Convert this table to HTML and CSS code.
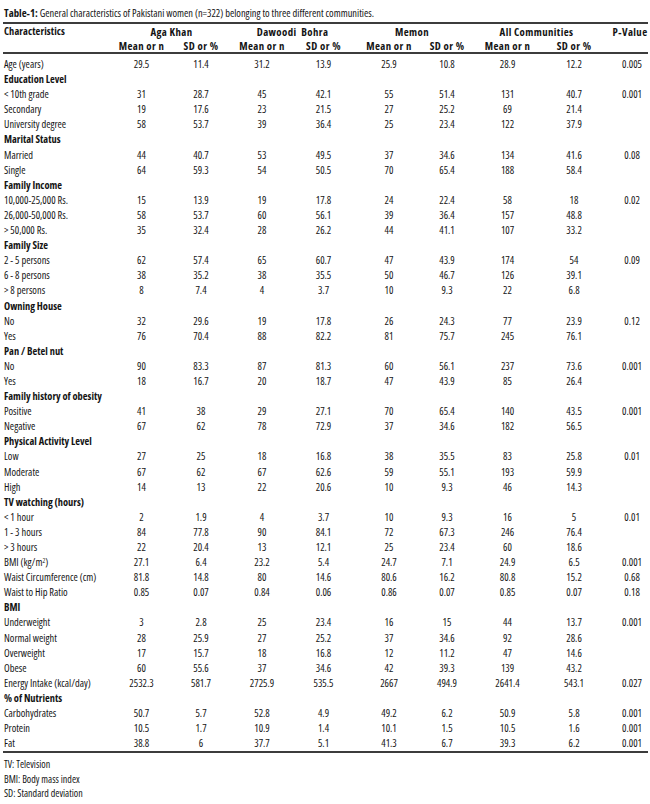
FILE: index.html
```html
<!DOCTYPE html>
<html lang="en">
<head>
<meta charset="utf-8">
<title>Table-1</title>
<link rel="stylesheet" href="styles.css">
</head>
<body>
<div class="caption"><b>Table-1:</b> General characteristics of Pakistani women (n=322) belonging to three different communities.</div>
<table class="data">
<colgroup>
<col class="c-char"><col class="c2"><col class="c3"><col class="c4"><col class="c5"><col class="c6"><col class="c7"><col class="c8"><col class="c9"><col class="c10">
</colgroup>
<thead>
<tr class="h1">
<th class="lab" rowspan="2">Characteristics</th>
<th colspan="2">Aga Khan</th>
<th colspan="2" class="spaced">Dawoodi&nbsp; Bohra</th>
<th colspan="2">Memon</th>
<th colspan="2">All Communities</th>
<th class="pv" rowspan="2">P-Value</th>
</tr>
<tr class="h2">
<th>Mean or n</th><th>SD or %</th>
<th>Mean or n</th><th>SD or %</th>
<th>Mean or n</th><th>SD or %</th>
<th>Mean or n</th><th>SD or %</th>
</tr>
</thead>
<tbody>
<tr class="first"><td class="lab">Age (years)</td><td>29.5</td><td>11.4</td><td>31.2</td><td>13.9</td><td>25.9</td><td>10.8</td><td>28.9</td><td>12.2</td><td class="pv">0.005</td></tr>
<tr class="grp"><td class="lab" colspan="10">Education Level</td></tr>
<tr><td class="lab">&lt; 10th grade</td><td>31</td><td>28.7</td><td>45</td><td>42.1</td><td>55</td><td>51.4</td><td>131</td><td>40.7</td><td class="pv">0.001</td></tr>
<tr><td class="lab">Secondary</td><td>19</td><td>17.6</td><td>23</td><td>21.5</td><td>27</td><td>25.2</td><td>69</td><td>21.4</td><td class="pv"></td></tr>
<tr><td class="lab">University degree</td><td>58</td><td>53.7</td><td>39</td><td>36.4</td><td>25</td><td>23.4</td><td>122</td><td>37.9</td><td class="pv"></td></tr>
<tr class="grp"><td class="lab" colspan="10">Marital Status</td></tr>
<tr><td class="lab">Married</td><td>44</td><td>40.7</td><td>53</td><td>49.5</td><td>37</td><td>34.6</td><td>134</td><td>41.6</td><td class="pv">0.08</td></tr>
<tr><td class="lab">Single</td><td>64</td><td>59.3</td><td>54</td><td>50.5</td><td>70</td><td>65.4</td><td>188</td><td>58.4</td><td class="pv"></td></tr>
<tr class="grp"><td class="lab" colspan="10">Family Income</td></tr>
<tr><td class="lab">10,000-25,000 Rs.</td><td>15</td><td>13.9</td><td>19</td><td>17.8</td><td>24</td><td>22.4</td><td>58</td><td>18</td><td class="pv">0.02</td></tr>
<tr><td class="lab">26,000-50,000 Rs.</td><td>58</td><td>53.7</td><td>60</td><td>56.1</td><td>39</td><td>36.4</td><td>157</td><td>48.8</td><td class="pv"></td></tr>
<tr><td class="lab">&gt; 50,000 Rs.</td><td>35</td><td>32.4</td><td>28</td><td>26.2</td><td>44</td><td>41.1</td><td>107</td><td>33.2</td><td class="pv"></td></tr>
<tr class="grp"><td class="lab" colspan="10">Family Size</td></tr>
<tr><td class="lab">2 - 5 persons</td><td>62</td><td>57.4</td><td>65</td><td>60.7</td><td>47</td><td>43.9</td><td>174</td><td>54</td><td class="pv">0.09</td></tr>
<tr><td class="lab">6 - 8 persons</td><td>38</td><td>35.2</td><td>38</td><td>35.5</td><td>50</td><td>46.7</td><td>126</td><td>39.1</td><td class="pv"></td></tr>
<tr><td class="lab">&gt; 8 persons</td><td>8</td><td>7.4</td><td>4</td><td>3.7</td><td>10</td><td>9.3</td><td>22</td><td>6.8</td><td class="pv"></td></tr>
<tr class="grp"><td class="lab" colspan="10">Owning House</td></tr>
<tr><td class="lab">No</td><td>32</td><td>29.6</td><td>19</td><td>17.8</td><td>26</td><td>24.3</td><td>77</td><td>23.9</td><td class="pv">0.12</td></tr>
<tr><td class="lab">Yes</td><td>76</td><td>70.4</td><td>88</td><td>82.2</td><td>81</td><td>75.7</td><td>245</td><td>76.1</td><td class="pv"></td></tr>
<tr class="grp"><td class="lab" colspan="10">Pan / Betel nut</td></tr>
<tr><td class="lab">No</td><td>90</td><td>83.3</td><td>87</td><td>81.3</td><td>60</td><td>56.1</td><td>237</td><td>73.6</td><td class="pv">0.001</td></tr>
<tr><td class="lab">Yes</td><td>18</td><td>16.7</td><td>20</td><td>18.7</td><td>47</td><td>43.9</td><td>85</td><td>26.4</td><td class="pv"></td></tr>
<tr class="grp"><td class="lab" colspan="10">Family history of obesity</td></tr>
<tr><td class="lab">Positive</td><td>41</td><td>38</td><td>29</td><td>27.1</td><td>70</td><td>65.4</td><td>140</td><td>43.5</td><td class="pv">0.001</td></tr>
<tr><td class="lab">Negative</td><td>67</td><td>62</td><td>78</td><td>72.9</td><td>37</td><td>34.6</td><td>182</td><td>56.5</td><td class="pv"></td></tr>
<tr class="grp"><td class="lab" colspan="10">Physical Activity Level</td></tr>
<tr><td class="lab">Low</td><td>27</td><td>25</td><td>18</td><td>16.8</td><td>38</td><td>35.5</td><td>83</td><td>25.8</td><td class="pv">0.01</td></tr>
<tr><td class="lab">Moderate</td><td>67</td><td>62</td><td>67</td><td>62.6</td><td>59</td><td>55.1</td><td>193</td><td>59.9</td><td class="pv"></td></tr>
<tr><td class="lab">High</td><td>14</td><td>13</td><td>22</td><td>20.6</td><td>10</td><td>9.3</td><td>46</td><td>14.3</td><td class="pv"></td></tr>
<tr class="grp"><td class="lab" colspan="10">TV watching (hours)</td></tr>
<tr><td class="lab">&lt; 1 hour</td><td>2</td><td>1.9</td><td>4</td><td>3.7</td><td>10</td><td>9.3</td><td>16</td><td>5</td><td class="pv">0.01</td></tr>
<tr><td class="lab">1 - 3 hours</td><td>84</td><td>77.8</td><td>90</td><td>84.1</td><td>72</td><td>67.3</td><td>246</td><td>76.4</td><td class="pv"></td></tr>
<tr><td class="lab">&gt; 3 hours</td><td>22</td><td>20.4</td><td>13</td><td>12.1</td><td>25</td><td>23.4</td><td>60</td><td>18.6</td><td class="pv"></td></tr>
<tr><td class="lab">BMI (kg/m<sup>2</sup>)</td><td>27.1</td><td>6.4</td><td>23.2</td><td>5.4</td><td>24.7</td><td>7.1</td><td>24.9</td><td>6.5</td><td class="pv">0.001</td></tr>
<tr><td class="lab">Waist Circumference (cm)</td><td>81.8</td><td>14.8</td><td>80</td><td>14.6</td><td>80.6</td><td>16.2</td><td>80.8</td><td>15.2</td><td class="pv">0.68</td></tr>
<tr><td class="lab">Waist to Hip Ratio</td><td>0.85</td><td>0.07</td><td>0.84</td><td>0.06</td><td>0.86</td><td>0.07</td><td>0.85</td><td>0.07</td><td class="pv">0.18</td></tr>
<tr class="grp"><td class="lab" colspan="10">BMI</td></tr>
<tr><td class="lab">Underweight</td><td>3</td><td>2.8</td><td>25</td><td>23.4</td><td>16</td><td>15</td><td>44</td><td>13.7</td><td class="pv">0.001</td></tr>
<tr><td class="lab">Normal weight</td><td>28</td><td>25.9</td><td>27</td><td>25.2</td><td>37</td><td>34.6</td><td>92</td><td>28.6</td><td class="pv"></td></tr>
<tr><td class="lab">Overweight</td><td>17</td><td>15.7</td><td>18</td><td>16.8</td><td>12</td><td>11.2</td><td>47</td><td>14.6</td><td class="pv"></td></tr>
<tr><td class="lab">Obese</td><td>60</td><td>55.6</td><td>37</td><td>34.6</td><td>42</td><td>39.3</td><td>139</td><td>43.2</td><td class="pv"></td></tr>
<tr><td class="lab">Energy Intake (kcal/day)</td><td>2532.3</td><td>581.7</td><td>2725.9</td><td>535.5</td><td>2667</td><td>494.9</td><td>2641.4</td><td>543.1</td><td class="pv">0.027</td></tr>
<tr class="grp"><td class="lab" colspan="10">% of Nutrients</td></tr>
<tr><td class="lab">Carbohydrates</td><td>50.7</td><td>5.7</td><td>52.8</td><td>4.9</td><td>49.2</td><td>6.2</td><td>50.9</td><td>5.8</td><td class="pv">0.001</td></tr>
<tr><td class="lab">Protein</td><td>10.5</td><td>1.7</td><td>10.9</td><td>1.4</td><td>10.1</td><td>1.5</td><td>10.5</td><td>1.6</td><td class="pv">0.001</td></tr>
<tr class="last"><td class="lab">Fat</td><td>38.8</td><td>6</td><td>37.7</td><td>5.1</td><td>41.3</td><td>6.7</td><td>39.3</td><td>6.2</td><td class="pv">0.001</td></tr>
</tbody>
</table>
<div class="notes">
<div class="note">TV: Television</div>
<div class="note">BMI: Body mass index</div>
<div class="note">SD: Standard deviation</div>
</div>
</body>
</html>
```
FILE: styles.css
```css
html, body {
  margin: 0;
  padding: 0;
  background: #ffffff;
  overflow: hidden;
}
body {
  font-family: "Open Sans", "DejaVu Sans Condensed", sans-serif;
  font-stretch: 75%;
  font-size: 10.4px;
  font-weight: 430;
  color: #141414;
  width: 650px;
}
.caption {
  padding: 6px 0 0 4px;
  line-height: 14px;
  font-size: 10.4px;
  white-space: nowrap;
}
.caption b {
  font-weight: 700;
  font-size: 10.8px;
}
.data {
  margin: 2px 0 0 3px;
  width: 645px;
  table-layout: fixed;
  border-collapse: separate;
  border-spacing: 0;
}
.c-char { width: 109px; }
.c2 { width: 59px; }
.c3 { width: 60px; }
.c4 { width: 62px; }
.c5 { width: 61px; }
.c6 { width: 70px; }
.c7 { width: 46px; }
.c8 { width: 75px; }
.c9 { width: 58px; }
.c10 { width: 45px; }
.data th, .data td {
  padding: 0;
  text-align: center;
  white-space: nowrap;
  overflow: visible;
}
.data th {
  font-weight: 700;
  font-size: 10.8px;
  letter-spacing: 0.4px;
}
.data th.lab {
  font-size: 10.4px;
  letter-spacing: 0.1px;
}
.data .h1 th {
  border-top: 2px solid #3c3c3c;
  line-height: 15px;
  vertical-align: top;
}
.data .h2 th {
  line-height: 13px;
  border-bottom: 2px solid #3c3c3c;
}
.data th.lab, .data th.pv {
  border-bottom: 2px solid #3c3c3c;
}
.spaced {
  letter-spacing: 0.5px;
}
.data td {
  line-height: 15.1px;
  vertical-align: middle;
}
.data .lab {
  text-align: left;
  padding-left: 1px;
}
.data .pv {
  padding-left: 13px;
}
.data th.pv {
  padding-left: 9px;
}
.data .grp td {
  font-weight: 700;
}
.data .first td {
  padding-top: 3px;
}
.data .last td {
  border-bottom: 2px solid #3c3c3c;
}
sup {
  font-size: 6.5px;
  line-height: 0;
  vertical-align: 3px;
}
.notes {
  margin-top: 4px;
  padding-left: 4px;
  font-size: 10px;
  line-height: 14.5px;
}
```
